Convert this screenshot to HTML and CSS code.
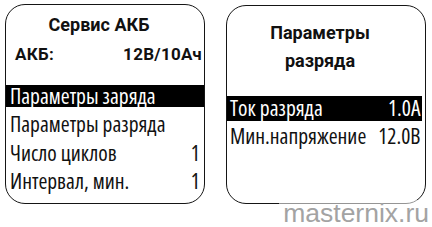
FILE: index.html
```html
<!DOCTYPE html>
<html lang="ru">
<head>
<meta charset="utf-8">
<title>Сервис АКБ</title>
<link rel="stylesheet" href="styles.css">
</head>
<body>
<div class="page">
  <div class="screens">
    <section class="panel panel-left">
      <div class="title">Сервис АКБ</div>
      <div class="info"><span>АКБ:</span><span>12В/10Ач</span></div>
      <ul class="menu menu-left">
        <li class="item selected"><span>Параметры заряда</span></li>
        <li class="item"><span>Параметры разряда</span></li>
        <li class="item"><span>Число циклов</span><span>1</span></li>
        <li class="item"><span>Интервал, мин.</span><span>1</span></li>
      </ul>
    </section>
    <section class="panel panel-right">
      <div class="title title-two">Параметры<br>разряда</div>
      <ul class="menu menu-right">
        <li class="item selected"><span>Ток разряда</span><span>1.0А</span></li>
        <li class="item"><span>Мин.напряжение</span><span>12.0В</span></li>
      </ul>
    </section>
  </div>
  <div class="watermark">masternix.ru</div>
</div>
</body>
</html>
```
FILE: styles.css
```css
html, body {
  margin: 0;
  padding: 0;
  background: #fff;
}
.page {
  position: relative;
  width: 432px;
  height: 227px;
  overflow: hidden;
  font-family: "Open Sans", "Noto Sans", sans-serif;
  font-stretch: 75%;
  color: #111;
}
.screens {
  display: flex;
  align-items: flex-start;
  gap: 21px;
  padding: 4px 0 0 5px;
}
.panel {
  box-sizing: border-box;
  width: 200px;
  height: 200px;
  border: 1.5px solid #151515;
  border-radius: 20px;
  display: flex;
  flex-direction: column;
}
.panel-right {
  margin-top: 1px;
  height: 199px;
}
.title {
  font-family: Roboto, "Liberation Sans", sans-serif;
  font-stretch: normal;
  font-weight: bold;
  font-size: 18px;
  line-height: 20px;
  text-align: center;
  padding: 10.3px 12px 0 0;
}
.title-two {
  line-height: 28px;
  padding-top: 13.3px;
}
.info {
  display: flex;
  justify-content: space-between;
  font-family: Roboto, "Liberation Sans", sans-serif;
  font-stretch: normal;
  font-weight: bold;
  font-size: 17px;
  line-height: 20px;
  margin-top: 8.3px;
  padding: 0 2px 0 9px;
  letter-spacing: 0.3px;
}
.menu {
  list-style: none;
  margin: 21px 0 0;
  padding: 0;
  display: flex;
  flex-direction: column;
  gap: 6.5px;
}
.item {
  display: flex;
  justify-content: space-between;
  box-sizing: border-box;
  height: 22px;
  padding: 0 4px 0 4px;
  font-size: 21.5px;
  line-height: 22px;
  white-space: nowrap;
}
.item.selected {
  background: #000;
  color: #fff;
  font-weight: 500;
}
.menu-right {
  margin: 21.2px 3.5px 0 0;
  gap: 3px;
}
.menu-right .item {
  height: 25px;
  padding: 1px 1px 2px 3px;
}
.watermark {
  position: absolute;
  right: 3px;
  bottom: 0;
  padding: 0 0 0 4px;
  font-family: "Liberation Sans", Arial, sans-serif;
  font-stretch: normal;
  font-size: 26.5px;
  line-height: 27px;
  color: #a3a3a3;
  background: rgba(255, 255, 255, 0.55);
}
```
